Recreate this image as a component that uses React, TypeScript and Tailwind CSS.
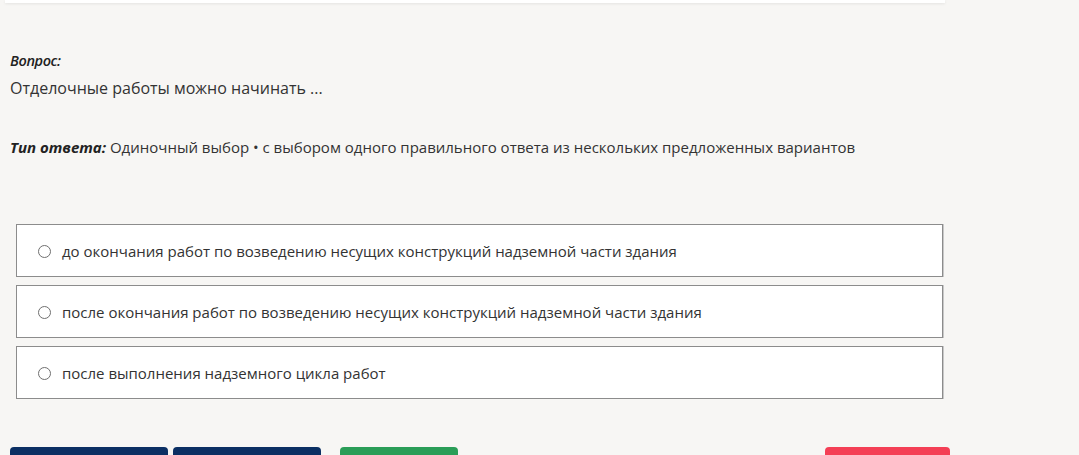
import React from "react";

const options = [
  "до окончания работ по возведению несущих конструкций надземной части здания",
  "после окончания работ по возведению несущих конструкций надземной части здания",
  "после выполнения надземного цикла работ",
];

export default function App() {
  return (
    <div
      className="w-[1079px] h-[455px] overflow-hidden bg-[#f7f6f4] text-[#333]"
      style={{ fontFamily: '"Open Sans", "Noto Sans", sans-serif' }}
    >
      <div className="w-[950px]">
        <div className="mx-[5px] h-[3px] bg-white shadow-[0_1px_3px_rgba(0,0,0,0.08)]" />
        <div className="pl-[10px] pt-[47px]">
          <p className="text-[14.5px] font-semibold italic text-[#222] leading-[22px] tracking-[-0.4px]">Вопрос:</p>
          <p className="text-[16px] leading-[22px] mt-[5px]">Отделочные работы можно начинать ...</p>
          <p className="text-[15px] leading-[22px] mt-[37px]">
            <span className="font-bold italic text-[#222]">Тип ответа:</span> Одиночный выбор • с
            выбором одного правильного ответа из нескольких предложенных вариантов
          </p>
        </div>
        <div className="flex flex-col gap-[8px] mt-[66px] ml-[16px] w-[927px]">
          {options.map((o) => (
            <label
              key={o}
              className="flex items-center h-[53px] bg-white border border-[#8c8c8c] shadow-[1px_0_0_#c8c8c8] pl-[21px] pt-[2px]"
            >
              <span className="w-[13px] h-[13px] rounded-full border border-[#6f6f6f] shrink-0" />
              <span className="ml-[11px] text-[15px] text-[#333]">{o}</span>
            </label>
          ))}
        </div>
        <div className="flex mt-[48px] pl-[10px]">
          <div className="w-[158px] h-[30px] bg-[#0b2f63] rounded-[4px]" />
          <div className="w-[148px] h-[30px] bg-[#0b2f63] rounded-[4px] ml-[5px]" />
          <div className="w-[118px] h-[30px] bg-[#2a9d57] rounded-[4px] ml-[19px]" />
          <div className="w-[125px] h-[30px] bg-[#f43f55] rounded-[4px] ml-auto" />
        </div>
      </div>
    </div>
  );
}
